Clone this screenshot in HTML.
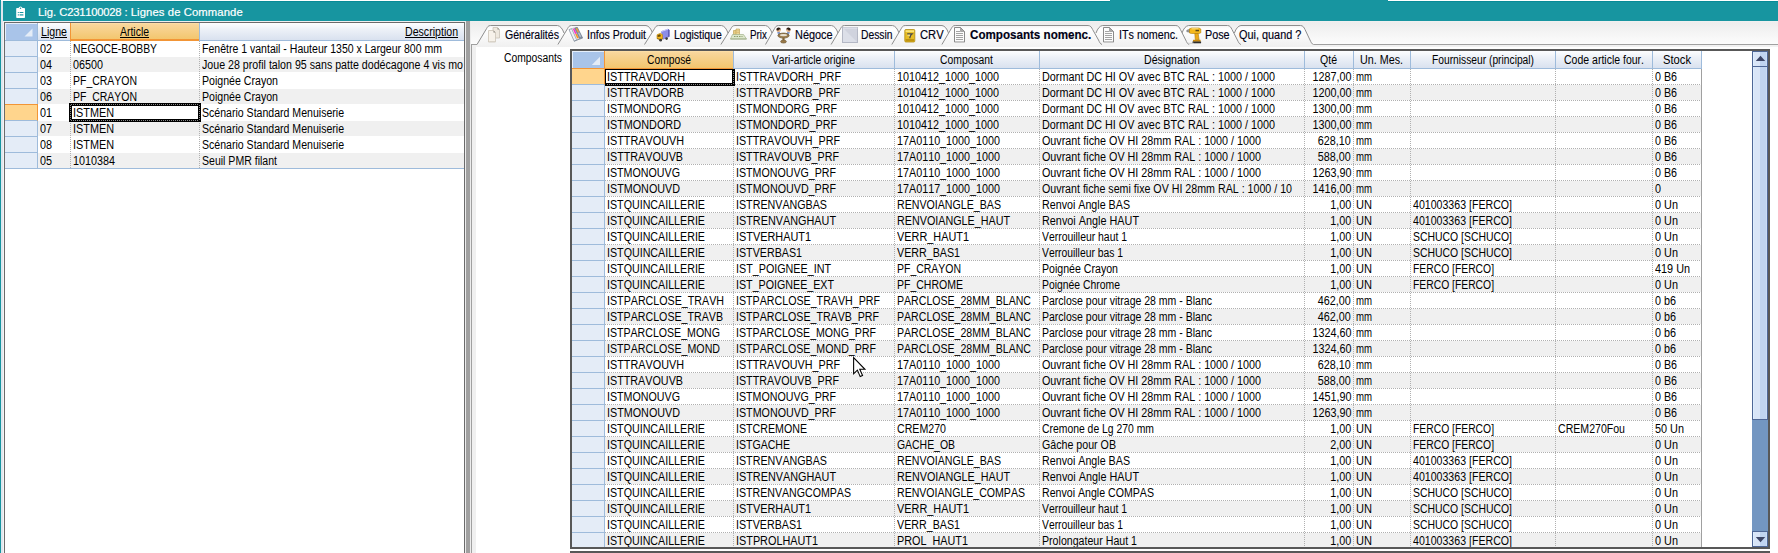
<!DOCTYPE html>
<html lang="fr"><head><meta charset="utf-8"><title>Lig. C231100028 : Lignes de Commande</title>
<style>
html,body{margin:0;padding:0}
body{width:1778px;height:553px;overflow:hidden;background:#fff;position:relative;
 font-family:"Liberation Sans",sans-serif;font-size:12px;color:#000;font-kerning:none}
div,span.t,span.h,svg{position:absolute}
div{box-sizing:border-box}
.t,.h{white-space:nowrap;line-height:15px;height:15px;transform-origin:0 50%;font-size:12px}
.t.r,.h.r{transform-origin:100% 50%}
.u{text-decoration:underline}
.clip{overflow:hidden}
.hd{background:linear-gradient(#fdfeff 0%,#eef2f8 35%,#d9e1ef 100%)}
.ho{background:linear-gradient(#ffe1aa 0%,#f8d69b 10%,#f3c66e 100%)}
.tab{font-size:12px;line-height:14px;white-space:nowrap;position:absolute;color:#000014;-webkit-text-stroke:0.15px #000014;transform-origin:0 50%}
</style></head><body>

<div style="left:0px;top:0px;width:1778px;height:21px;background:#1795a0"></div>
<div style="left:0px;top:0px;width:1px;height:553px;background:#1795a0"></div>
<div style="left:1px;top:0px;width:2px;height:553px;background:#dfe6ee"></div>
<div style="left:3px;top:0px;width:1px;height:553px;background:#f4f4f4"></div>
<div style="left:3px;top:0px;width:1775px;height:21px;background:#1795a0"></div>
<div style="left:1px;top:0px;width:1109px;height:1px;background:#fff"></div>
<div style="left:3px;top:1px;width:1107px;height:1px;background:#088b97"></div>
<div style="left:1388px;top:0px;width:390px;height:1px;background:#fff"></div>
<div style="left:1388px;top:1px;width:390px;height:1px;background:#088b97"></div>
<div style="left:3px;top:21px;width:1775px;height:1px;background:#f0f0f0"></div>
<svg style="left:16px;top:6px" width="10" height="13" viewBox="0 0 10 13">
<rect x=".2" y="2" width="8.800" height="10" rx=".8" fill="#fff"/>
<path d="M2.200 2.500L3.300 .9Q4.500 -.1 5.700 .9L6.800 2.500z" fill="#fff"/>
<circle cx="4.500" cy="2.300" r=".75" fill="#1795a0"/>
<rect x="1.800" y="6" width="1" height="1" fill="#1795a0"/><rect x="3.600" y="6" width="3.800" height="1" fill="#1795a0"/>
<rect x="1.800" y="8.300" width="1" height="1.200" fill="#1795a0"/><rect x="3.600" y="8.300" width="3.800" height="1.200" fill="#1795a0"/>
</svg>
<span class="h" style="left:38px;top:3px;font-size:11.2px;line-height:18px;height:18px;color:#fff;-webkit-text-stroke:0.2px #fff;position:absolute;transform:scaleX(1.008)">Lig. <span style="letter-spacing:-.26px">C231100028</span> : <span style="letter-spacing:.1px">Lignes de Commande</span></span>
<div style="left:4px;top:22px;width:461px;height:1px;background:#6b6b6b"></div>
<div style="left:4px;top:22px;width:1px;height:531px;background:#6b6b6b"></div>
<div style="left:464px;top:22px;width:1px;height:531px;background:#6b6b6b"></div>
<div style="left:465px;top:21px;width:1px;height:532px;background:#ececec"></div>
<div style="left:466px;top:21px;width:4px;height:532px;background:#a0a0a0"></div>
<div style="left:470px;top:21px;width:1px;height:532px;background:#ececec"></div>
<div style="left:5px;top:23px;width:32px;height:17px;background:#a9c4e9;border-left:1px solid #e6effb;border-top:1px solid #e6effb"></div>
<svg style="left:24px;top:28px" width="9" height="9"><path d="M8.500 .5V8.500H.5z" fill="#e4ecf7"/></svg>
<div style="left:37px;top:23px;width:1px;height:17px;background:#9ebbdb"></div>
<div class="hd" style="left:38px;top:23px;width:32px;height:17px;"></div>
<div class="ho" style="left:70px;top:23px;width:129px;height:17px;border-left:1px solid #f29536;border-bottom:1px solid #f29536"></div>
<div style="left:199px;top:23px;width:1px;height:17px;background:#9ebbdb"></div>
<div class="hd" style="left:200px;top:23px;width:264px;height:17px;"></div>
<div style="left:5px;top:40px;width:65px;height:1px;background:#9ebbdb"></div>
<div style="left:199px;top:40px;width:265px;height:1px;background:#9ebbdb"></div>
<div style="left:70px;top:40px;width:129px;height:1px;background:#f29536"></div>
<span class="t u" style="left:41px;top:25px;transform:scaleX(0.8855)">Ligne</span>
<span class="t u" style="left:119.50px;top:25px;transform:scaleX(0.8698)">Article</span>
<span class="t u r" style="right:1320px;top:25px;transform:scaleX(0.8830)">Description</span>
<div style="left:5px;top:41px;width:32px;height:15px;background:#e4ecf7"></div>
<div style="left:5px;top:56px;width:32px;height:1px;background:#9ebbdb"></div>
<div style="left:37px;top:41px;width:1px;height:16px;background:#9ebbdb"></div>
<span class="t" style="left:40px;top:42px;transform:scaleX(0.8990)">02</span>
<span class="t" style="left:73px;top:42px;transform:scaleX(0.8628)">NEGOCE-BOBBY</span>
<div class="clip" style="left:200px;top:41px;width:264px;height:15px">
<span class="t" style="left:2px;top:1px;transform:scaleX(0.8776)">Fenêtre 1 vantail - Hauteur 1350 x Largeur 800 mm</span>
</div>
<div style="left:5px;top:57px;width:32px;height:15px;background:#e4ecf7"></div>
<div style="left:5px;top:72px;width:32px;height:1px;background:#9ebbdb"></div>
<div style="left:37px;top:57px;width:1px;height:16px;background:#9ebbdb"></div>
<div style="left:38px;top:57px;width:426px;height:15px;background:#f0f0f0"></div>
<span class="t" style="left:40px;top:58px;transform:scaleX(0.8990)">04</span>
<span class="t" style="left:73px;top:58px;transform:scaleX(0.8990)">06500</span>
<div class="clip" style="left:200px;top:57px;width:264px;height:15px">
<span class="t" style="left:2px;top:1px;transform:scaleX(0.8872)">Joue 28 profil talon 95 sans patte dodécagone 4 vis mo</span>
</div>
<div style="left:5px;top:73px;width:32px;height:15px;background:#e4ecf7"></div>
<div style="left:5px;top:88px;width:32px;height:1px;background:#9ebbdb"></div>
<div style="left:37px;top:73px;width:1px;height:16px;background:#9ebbdb"></div>
<span class="t" style="left:40px;top:74px;transform:scaleX(0.8990)">03</span>
<span class="t" style="left:73px;top:74px;transform:scaleX(0.8727)">PF_CRAYON</span>
<div class="clip" style="left:200px;top:73px;width:264px;height:15px">
<span class="t" style="left:2px;top:1px;transform:scaleX(0.8831)">Poignée Crayon</span>
</div>
<div style="left:5px;top:89px;width:32px;height:15px;background:#e4ecf7"></div>
<div style="left:5px;top:104px;width:32px;height:1px;background:#9ebbdb"></div>
<div style="left:37px;top:89px;width:1px;height:16px;background:#9ebbdb"></div>
<div style="left:38px;top:89px;width:426px;height:15px;background:#f0f0f0"></div>
<span class="t" style="left:40px;top:90px;transform:scaleX(0.8990)">06</span>
<span class="t" style="left:73px;top:90px;transform:scaleX(0.8727)">PF_CRAYON</span>
<div class="clip" style="left:200px;top:89px;width:264px;height:15px">
<span class="t" style="left:2px;top:1px;transform:scaleX(0.8831)">Poignée Crayon</span>
</div>
<div style="left:5px;top:104px;width:33px;height:17px;background:#ffd58d;border-top:1px solid #f29536;border-right:1px solid #f29536;border-bottom:1px solid #9ebbdb"></div>
<span class="t" style="left:40px;top:106px;transform:scaleX(0.8990)">01</span>
<span class="t" style="left:73px;top:106px;transform:scaleX(0.9044)">ISTMEN</span>
<div class="clip" style="left:200px;top:105px;width:264px;height:15px">
<span class="t" style="left:2px;top:1px;transform:scaleX(0.8797)">Scénario Standard Menuiserie</span>
</div>
<div style="left:5px;top:121px;width:32px;height:15px;background:#e4ecf7"></div>
<div style="left:5px;top:136px;width:32px;height:1px;background:#9ebbdb"></div>
<div style="left:37px;top:121px;width:1px;height:16px;background:#9ebbdb"></div>
<div style="left:38px;top:121px;width:426px;height:15px;background:#f0f0f0"></div>
<span class="t" style="left:40px;top:122px;transform:scaleX(0.8990)">07</span>
<span class="t" style="left:73px;top:122px;transform:scaleX(0.9044)">ISTMEN</span>
<div class="clip" style="left:200px;top:121px;width:264px;height:15px">
<span class="t" style="left:2px;top:1px;transform:scaleX(0.8797)">Scénario Standard Menuiserie</span>
</div>
<div style="left:5px;top:137px;width:32px;height:15px;background:#e4ecf7"></div>
<div style="left:5px;top:152px;width:32px;height:1px;background:#9ebbdb"></div>
<div style="left:37px;top:137px;width:1px;height:16px;background:#9ebbdb"></div>
<span class="t" style="left:40px;top:138px;transform:scaleX(0.8990)">08</span>
<span class="t" style="left:73px;top:138px;transform:scaleX(0.9044)">ISTMEN</span>
<div class="clip" style="left:200px;top:137px;width:264px;height:15px">
<span class="t" style="left:2px;top:1px;transform:scaleX(0.8797)">Scénario Standard Menuiserie</span>
</div>
<div style="left:5px;top:153px;width:32px;height:15px;background:#e4ecf7"></div>
<div style="left:5px;top:168px;width:32px;height:1px;background:#9ebbdb"></div>
<div style="left:37px;top:153px;width:1px;height:16px;background:#9ebbdb"></div>
<div style="left:38px;top:153px;width:426px;height:15px;background:#f0f0f0"></div>
<span class="t" style="left:40px;top:154px;transform:scaleX(0.8990)">05</span>
<span class="t" style="left:73px;top:154px;transform:scaleX(0.8990)">1010384</span>
<div class="clip" style="left:200px;top:153px;width:264px;height:15px">
<span class="t" style="left:2px;top:1px;transform:scaleX(0.8786)">Seuil PMR filant</span>
</div>
<div style="left:70px;top:41px;width:1px;height:127px;background:repeating-linear-gradient(to bottom,#b0b0b0 0 1px,transparent 1px 2px)"></div>
<div style="left:199px;top:41px;width:1px;height:127px;background:repeating-linear-gradient(to bottom,#b0b0b0 0 1px,transparent 1px 2px)"></div>
<div style="left:5px;top:168px;width:459px;height:1px;background:#9ebbdb"></div>
<div style="left:69px;top:103px;width:132px;height:19px;border:3px solid #000"></div>
<div style="left:70px;top:104px;width:130px;height:1px;background:repeating-linear-gradient(to right,#000 0 1px,#8a8a8a 1px 2px)"></div>
<div style="left:70px;top:120px;width:130px;height:1px;background:repeating-linear-gradient(to right,#000 0 1px,#8a8a8a 1px 2px)"></div>
<div style="left:70px;top:104px;width:1px;height:17px;background:repeating-linear-gradient(to bottom,#000 0 1px,#8a8a8a 1px 2px)"></div>
<div style="left:199px;top:104px;width:1px;height:17px;background:repeating-linear-gradient(to bottom,#000 0 1px,#8a8a8a 1px 2px)"></div>
<div style="left:471px;top:22px;width:1307px;height:22px;background:linear-gradient(#ededed,#fcfcfc)"></div>
<div style="left:471px;top:44px;width:1307px;height:3px;background:#f2f2f2"></div>
<div style="left:471px;top:44px;width:5px;height:509px;background:#f0f0f0"></div>
<div style="left:471px;top:44px;width:1px;height:509px;background:#a0a0a0"></div>
<svg style="left:471px;top:22px" width="1307" height="25" viewBox="0 0 1307 25">
<defs><linearGradient id="tg" x1="0" y1="0" x2="0" y2="1"><stop offset="0" stop-color="#f3f3f3"/><stop offset=".16" stop-color="#ffffff"/><stop offset="1" stop-color="#f0f0f0"/></linearGradient><linearGradient id="sg" x1="0" y1="0" x2="0" y2="1"><stop offset="0" stop-color="#f3f3f3"/><stop offset=".16" stop-color="#ffffff"/><stop offset="1" stop-color="#f2f2f2"/></linearGradient></defs>
<path d="M0 22.5H6.0M842.5 22.5H1307" fill="none" stroke="#a0a0a0"/>
<path d="M6.0 22.5L15.5 6.7C16.3 5.3 17.0 3.5 19.5 3.5H86.5Q90.5 4.1 93.0 11.0L93.0 25H6.0z" fill="url(#tg)"/>
<path d="M6.0 22.5L15.5 6.7C16.3 5.3 17.0 3.5 19.5 3.5H86.5Q90.5 4.1 93.0 11.0" fill="none" stroke="#8e8e8e"/>
<path d="M86.9 22.5L96.5 6.7C97.3 5.3 98.0 3.5 100.5 3.5H175.0Q179.0 4.1 181.5 11.0L181.5 25H86.9z" fill="url(#tg)"/>
<path d="M86.9 22.5L96.5 6.7C97.3 5.3 98.0 3.5 100.5 3.5H175.0Q179.0 4.1 181.5 11.0" fill="none" stroke="#8e8e8e"/>
<path d="M173.5 22.5L183.5 6.7C184.3 5.3 185.0 3.5 187.5 3.5H250.5Q254.5 4.1 257.0 11.0L257.0 25H173.5z" fill="url(#tg)"/>
<path d="M173.5 22.5L183.5 6.7C184.3 5.3 185.0 3.5 187.5 3.5H250.5Q254.5 4.1 257.0 11.0" fill="none" stroke="#8e8e8e"/>
<path d="M249.9 22.5L259.9 6.7C260.7 5.3 261.4 3.5 263.9 3.5H294.5Q298.5 4.1 301.0 11.0L301.0 25H249.9z" fill="url(#tg)"/>
<path d="M249.9 22.5L259.9 6.7C260.7 5.3 261.4 3.5 263.9 3.5H294.5Q298.5 4.1 301.0 11.0" fill="none" stroke="#8e8e8e"/>
<path d="M294.5 22.5L303.5 6.7C304.3 5.3 305.0 3.5 307.5 3.5H360.5Q364.5 4.1 367.0 11.0L367.0 25H294.5z" fill="url(#tg)"/>
<path d="M294.5 22.5L303.5 6.7C304.3 5.3 305.0 3.5 307.5 3.5H360.5Q364.5 4.1 367.0 11.0" fill="none" stroke="#8e8e8e"/>
<path d="M360.1 22.5L369.5 6.7C370.3 5.3 371.0 3.5 373.5 3.5H421.5Q425.5 4.1 428.0 11.0L428.0 25H360.1z" fill="url(#tg)"/>
<path d="M360.1 22.5L369.5 6.7C370.3 5.3 371.0 3.5 373.5 3.5H421.5Q425.5 4.1 428.0 11.0" fill="none" stroke="#8e8e8e"/>
<path d="M420.8 22.5L430.2 6.7C431.0 5.3 431.7 3.5 434.2 3.5H471.0Q475.0 4.1 477.5 11.0L477.5 25H420.8z" fill="url(#tg)"/>
<path d="M420.8 22.5L430.2 6.7C431.0 5.3 431.7 3.5 434.2 3.5H471.0Q475.0 4.1 477.5 11.0" fill="none" stroke="#8e8e8e"/>
<path d="M763.4 11.0Q765.9 4.1 769.9 3.5H829.5C832.0 3.5 833.0 5.5 834.0 7.5L839.0 18.0C840.0 20.0 840.7 22.0 842.5 22.5L842.5 25H763.4z" fill="url(#tg)"/>
<path d="M763.4 11.0Q765.9 4.1 769.9 3.5H829.5C832.0 3.5 833.0 5.5 834.0 7.5L839.0 18.0C840.0 20.0 840.7 22.0 842.5 22.5" fill="none" stroke="#8e8e8e"/>
<path d="M711.0 11.0Q713.5 4.1 717.5 3.5H756.5C759.0 3.5 760.0 5.5 761.0 7.5L766.4 18.0C767.4 20.0 768.1 22.0 769.9 22.5L769.9 25H711.0z" fill="url(#tg)"/>
<path d="M711.0 11.0Q713.5 4.1 717.5 3.5H756.5C759.0 3.5 760.0 5.5 761.0 7.5L766.4 18.0C767.4 20.0 768.1 22.0 769.9 22.5" fill="none" stroke="#8e8e8e"/>
<path d="M625.0 11.0Q627.5 4.1 631.5 3.5H704.9C707.4 3.5 708.4 5.5 709.4 7.5L714.7 18.0C715.7 20.0 716.4 22.0 718.2 22.5L718.2 25H625.0z" fill="url(#tg)"/>
<path d="M625.0 11.0Q627.5 4.1 631.5 3.5H704.9C707.4 3.5 708.4 5.5 709.4 7.5L714.7 18.0C715.7 20.0 716.4 22.0 718.2 22.5" fill="none" stroke="#8e8e8e"/>
<path d="M470.9 22.5L480.2 6.7C481.0 5.3 481.7 3.5 484.2 3.5H617.1C619.6 3.5 620.6 5.5 621.6 7.5L627.5 18.0C628.5 20.0 629.2 22.0 631.0 22.5L631.0 25H470.9z" fill="url(#sg)"/>
<path d="M470.9 22.5L480.2 6.7C481.0 5.3 481.7 3.5 484.2 3.5H617.1C619.6 3.5 620.6 5.5 621.6 7.5L627.5 18.0C628.5 20.0 629.2 22.0 631.0 22.5" fill="none" stroke="#8e8e8e"/>
</svg>
<span class="tab" style="left:505.0px;top:28px;transform:scaleX(0.8783);">Généralités</span>
<span class="tab" style="left:586.5px;top:28px;transform:scaleX(0.8757);">Infos Produit</span>
<span class="tab" style="left:673.9px;top:28px;transform:scaleX(0.8719);">Logistique</span>
<span class="tab" style="left:749.8px;top:28px;transform:scaleX(0.8129);">Prix</span>
<span class="tab" style="left:794.8px;top:28px;transform:scaleX(0.9091);">Négoce</span>
<span class="tab" style="left:861.0px;top:28px;transform:scaleX(0.8588);">Dessin</span>
<span class="tab" style="left:919.5px;top:28px;transform:scaleX(0.9316);">CRV</span>
<span class="tab" style="left:969.6px;top:28px;transform:scaleX(0.9677);font-weight:bold;">Composants nomenc.</span>
<span class="tab" style="left:1118.5px;top:28px;transform:scaleX(0.8939);">ITs nomenc.</span>
<span class="tab" style="left:1205.0px;top:28px;transform:scaleX(0.8994);">Pose</span>
<span class="tab" style="left:1238.8px;top:28px;transform:scaleX(0.9066);">Qui, quand ?</span>
<svg style="left:487px;top:26px" width="14" height="17" viewBox="0 0 14 17"><path d="M6 1.500h4.500l2 2v8.500H6z" fill="#efe9df" stroke="#c9c2b6" stroke-width=".8"/><path d="M10.500 1.500v2h2z" fill="#8f8a82"/><path d="M1.500 4.500h5l2 2v9.500h-7z" fill="#f7f2ea" stroke="#cbc4b8" stroke-width=".8"/><path d="M6.500 4.500v2h2z" fill="#85817a"/><path d="M2.500 15.500h6" stroke="#d9d3c8" stroke-width="1"/></svg>
<svg style="left:568px;top:27px" width="16" height="15" viewBox="0 0 16 15"><path d="M1 2.600l2.600-1 5.200 11.200-2.600 1.400z" fill="#eef1f5" stroke="#8a94a2" stroke-width=".8"/><path d="M3.800 1.600l2.400-.7 5 10.800-2.400 1z" fill="#f4f4f6" stroke="#9aa3b0" stroke-width=".5"/><path d="M4.800 1.800l1.500-.4 2.300 5-1.500.5z" fill="#ff2fc6"/><path d="M7.200 7.200l1.500-.5 2 4.300-1.500.6z" fill="#ff9418"/><path d="M6.700 .9l2.600-.6 5.200 10.500-2.700 1.100z" fill="#8793a5" stroke="#5d6a7d" stroke-width=".6"/><path d="M7.800 1.200l1.300-.3 2 4.200-1.300.4z" fill="#f0a030"/><path d="M10 6l1.200-.4 2 4-1.300.5z" fill="#b8c2d0"/><path d="M6.200 14.200l8.600-3.400" stroke="#8a94a2" stroke-width="1"/></svg>
<svg style="left:656px;top:28px" width="14" height="14" viewBox="0 0 14 14"><path d="M5.500 3.500l6.500-2.300 1.300.8v6.500l-6.500 2.800z" fill="#8d8de8" stroke="#6a6ac8" stroke-width=".6"/><path d="M5.500 3.500l6.500-2.300" stroke="#cfcfff" stroke-width="1"/><path d="M12 1.200l1.300.8v6.500l-1.300.5z" fill="#5f5fb8"/><path d="M1 6.800l3.300-1.500 2.200 1.400v4.300l-2 1-3.500-1.400z" fill="#f4b61e" stroke="#b98512" stroke-width=".6"/><path d="M1.600 7.200l2.400-.9.700.6v1.600l-3.100.5z" fill="#6a4e0c"/><path d="M1 10.300l3.500 1.400 2-1" stroke="#8a6a10" stroke-width=".7" fill="none"/><circle cx="4.600" cy="12.200" r="1.400" fill="#3c3c3c"/><circle cx="10.600" cy="10.600" r="1.300" fill="#3c3c3c"/></svg>
<svg style="left:730px;top:28px" width="17" height="12" viewBox="0 0 17 12"><path d="M3.500 2.500h3v4.500h-3z" fill="#e6cc84" stroke="#bb9a48" stroke-width=".6"/><path d="M6 1h3.500v6H6z" fill="#efd99a" stroke="#bb9a48" stroke-width=".6"/><path d="M6.300 2.800h3M6.300 4.600h3" stroke="#caa95a" stroke-width=".5"/><path d="M2.500 6.500h11l3 4.500H.5z" fill="#dde7cc" stroke="#a3b28c" stroke-width=".7"/><path d="M4 8.500h8.500" stroke="#8c9e6c" stroke-width="1.200" stroke-dasharray="1.500 1"/><path d="M.5 11h16" stroke="#98a880" stroke-width=".8"/></svg>
<svg style="left:775px;top:27px" width="17" height="17" viewBox="0 0 17 17"><circle cx="3.600" cy="3.200" r="2.100" fill="#e8b890"/><path d="M1.400 3a2.200 2.200 0 0 1 4.400-.6l-1.800.2-.8 1.200z" fill="#2a1c14"/><circle cx="13.400" cy="3.200" r="2.100" fill="#e8b890"/><path d="M15.600 3a2.200 2.200 0 0 0-4.400-.6l1.800.2.800 1.200z" fill="#2a1c14"/><path d="M2 5.200l2.600-.4 1.400 3-2.200.6z" fill="#7f97c8"/><path d="M15 5.200l-2.600-.4-1.400 3 2.200.6z" fill="#7f97c8"/><ellipse cx="8.500" cy="8.600" rx="5.600" ry="2.500" fill="#9c7c4c" stroke="#66502c" stroke-width=".7"/><ellipse cx="8.500" cy="8.100" rx="3.600" ry="1.200" fill="#e6dfd0"/><path d="M7.400 10.800h2.200v2.800H7.400z" fill="#86683a"/><ellipse cx="8.500" cy="14.600" rx="2.900" ry="1.500" fill="#9a7a48" stroke="#66502c" stroke-width=".6"/></svg>
<svg style="left:842px;top:27px" width="17" height="17" viewBox="0 0 17 17"><rect x=".5" y=".5" width="15" height="15" fill="#d0d3de" stroke="#b4b8c5" stroke-width="1"/><path d="M1 1L15 15H1z" fill="#dcdfe8"/><path d="M1 1h14.500" stroke="#e6e8ef" stroke-width="1"/></svg>
<svg style="left:904px;top:29px" width="12" height="14" viewBox="0 0 12 14"><rect x=".8" y=".5" width="10" height="12.500" rx="1" fill="#e6bc24" stroke="#b08c14" stroke-width=".8"/><rect x="1.600" y="1.300" width="8.400" height="1.800" fill="#f9e47c"/><rect x="1.600" y="10" width="8.400" height="2.400" fill="#c09410"/><path d="M3.200 4.800h5l-1.500 1.500-1 3" fill="none" stroke="#4a4a4a" stroke-width="1.200"/><path d="M3.500 6.200h2.500" stroke="#f6f0d0" stroke-width=".8"/></svg>
<svg style="left:953px;top:27px" width="13" height="16" viewBox="0 0 13 16"><path d="M1.500 .5h6l4 4v10.500h-10z" fill="#fcfcfc" stroke="#8a8a8a" stroke-width="1"/><path d="M7.500 .5v4h4z" fill="#a8a8a8" stroke="#8a8a8a" stroke-width=".6"/><path d="M3 4.500h4M3 6.500h7M3 8.500h7M3 10.500h7M3 12.500h7" stroke="#a4a4a4" stroke-width="1"/><path d="M2 15.500h9.500" stroke="#c8c8c8" stroke-width="1"/></svg>
<svg style="left:1102px;top:27px" width="13" height="16" viewBox="0 0 13 16"><path d="M1.500 .5h6l4 4v10.500h-10z" fill="#fcfcfc" stroke="#8a8a8a" stroke-width="1"/><path d="M7.500 .5v4h4z" fill="#a8a8a8" stroke="#8a8a8a" stroke-width=".6"/><path d="M3 4.500h4M3 6.500h7M3 8.500h7M3 10.500h7M3 12.500h7" stroke="#a4a4a4" stroke-width="1"/><path d="M2 15.500h9.500" stroke="#c8c8c8" stroke-width="1"/></svg>
<svg style="left:1186px;top:27px" width="17" height="17" viewBox="0 0 17 17"><path d="M.8 3.200l2.800-.9v3l-2.800-.6z" fill="#9a9a9a" stroke="#6a6a6a" stroke-width=".5"/><path d="M3.500 1.800l2-.8h7.500l1.800 1v3.800l-1.800.7H5.500l-2-.5z" fill="#f5b81c" stroke="#b07c08" stroke-width=".6"/><path d="M5.500 1.800h7" stroke="#ffe488" stroke-width="1"/><path d="M9.500 2.800h3.500v1.500H9.500z" fill="#5a4a18"/><path d="M8.800 6.500h3.400l.9 6.300H9.300z" fill="#eeaa18" stroke="#b07c08" stroke-width=".6"/><path d="M7 12.800h7.600v2H7z" fill="#c8880c"/><path d="M6.500 14.500h8.600v1.800H6.500z" fill="#2e2e2e"/><path d="M2 16.300h6" stroke="#cfcfcf" stroke-width="1"/></svg>
<span class="t" style="left:504px;top:51px;transform:scaleX(0.8610)">Composants</span>
<div style="left:570px;top:49px;width:1200px;height:2px;background:#585858"></div>
<div style="left:570px;top:49px;width:2px;height:500px;background:#585858"></div>
<div style="left:1768px;top:49px;width:2px;height:500px;background:#585858"></div>
<div style="left:570px;top:547px;width:1200px;height:2px;background:#585858"></div>
<div style="left:570px;top:551px;width:1200px;height:2px;background:#585858"></div>
<div style="left:572px;top:51px;width:32px;height:17px;background:#a9c4e9;border-left:1px solid #e6effb;border-top:1px solid #e6effb"></div>
<svg style="left:591px;top:56px" width="10" height="10"><path d="M9 .8V9H.8z" fill="#e4ecf7"/></svg>
<div class="ho" style="left:604px;top:51px;width:129px;height:17px;border-left:1px solid #f29536"></div>
<div style="left:604px;top:68px;width:129px;height:1px;background:#f29536"></div>
<span class="t" style="left:646.50px;top:53px;transform:scaleX(0.8567)">Composé</span>
<div class="hd" style="left:734px;top:51px;width:160px;height:17px"></div>
<div style="left:733px;top:51px;width:1px;height:17px;background:#9ebbdb"></div>
<div style="left:733px;top:68px;width:161px;height:1px;background:#9ebbdb"></div>
<span class="t" style="left:772.00px;top:53px;transform:scaleX(0.8584)">Vari-article origine</span>
<div class="hd" style="left:895px;top:51px;width:144px;height:17px"></div>
<div style="left:894px;top:51px;width:1px;height:17px;background:#9ebbdb"></div>
<div style="left:894px;top:68px;width:145px;height:1px;background:#9ebbdb"></div>
<span class="t" style="left:940.00px;top:53px;transform:scaleX(0.8637)">Composant</span>
<div class="hd" style="left:1040px;top:51px;width:264px;height:17px"></div>
<div style="left:1039px;top:51px;width:1px;height:17px;background:#9ebbdb"></div>
<div style="left:1039px;top:68px;width:265px;height:1px;background:#9ebbdb"></div>
<span class="t" style="left:1143.50px;top:53px;transform:scaleX(0.8836)">Désignation</span>
<div class="hd" style="left:1305px;top:51px;width:48px;height:17px"></div>
<div style="left:1304px;top:51px;width:1px;height:17px;background:#9ebbdb"></div>
<div style="left:1304px;top:68px;width:49px;height:1px;background:#9ebbdb"></div>
<span class="t" style="left:1320.00px;top:53px;transform:scaleX(0.8789)">Qté</span>
<div class="hd" style="left:1354px;top:51px;width:56px;height:17px"></div>
<div style="left:1353px;top:51px;width:1px;height:17px;background:#9ebbdb"></div>
<div style="left:1353px;top:68px;width:57px;height:1px;background:#9ebbdb"></div>
<span class="t" style="left:1360.00px;top:53px;transform:scaleX(0.8956)">Un. Mes.</span>
<div class="hd" style="left:1411px;top:51px;width:144px;height:17px"></div>
<div style="left:1410px;top:51px;width:1px;height:17px;background:#9ebbdb"></div>
<div style="left:1410px;top:68px;width:145px;height:1px;background:#9ebbdb"></div>
<span class="t" style="left:1431.50px;top:53px;transform:scaleX(0.8545)">Fournisseur (principal)</span>
<div class="hd" style="left:1556px;top:51px;width:96px;height:17px"></div>
<div style="left:1555px;top:51px;width:1px;height:17px;background:#9ebbdb"></div>
<div style="left:1555px;top:68px;width:97px;height:1px;background:#9ebbdb"></div>
<span class="t" style="left:1563.50px;top:53px;transform:scaleX(0.8756)">Code article four.</span>
<div class="hd" style="left:1653px;top:51px;width:48px;height:17px"></div>
<div style="left:1652px;top:51px;width:1px;height:17px;background:#9ebbdb"></div>
<div style="left:1652px;top:68px;width:49px;height:1px;background:#9ebbdb"></div>
<span class="t" style="left:1662.50px;top:53px;transform:scaleX(0.9330)">Stock</span>
<div style="left:1701px;top:51px;width:1px;height:18px;background:#9ebbdb"></div>
<div style="left:572px;top:68px;width:32px;height:1px;background:#9ebbdb"></div>
<div class="clip" style="left:572px;top:69px;width:1180px;height:478px">
<div style="left:0px;top:-1px;width:33px;height:17px;background:#ffd58d;border-top:1px solid #f29536;border-right:1px solid #f29536;border-bottom:1px solid #9ebbdb"></div>
<div style="left:33px;top:15px;width:1096px;height:1px;background:repeating-linear-gradient(to right,#b0b0b0 0 1px,transparent 1px 2px)"></div>
<span class="t" style="left:35px;top:1px;transform:scaleX(0.9071)">ISTTRAVDORH</span>
<span class="t" style="left:164px;top:1px;transform:scaleX(0.9000)">ISTTRAVDORH_PRF</span>
<span class="t" style="left:325px;top:1px;transform:scaleX(0.8990)">1010412_1000_1000</span>
<div class="clip" style="left:468px;top:0px;width:264px;height:15px">
<span class="t" style="left:2px;top:1px;transform:scaleX(0.9004)">Dormant DC HI OV avec BTC RAL : 1000 / 1000</span>
</div>
<span class="t r" style="right:401px;top:1px;transform:scaleX(0.8991)">1287,00</span>
<span class="t" style="left:784px;top:1px;transform:scaleX(0.8003)">mm</span>
<span class="t" style="left:1083px;top:1px;transform:scaleX(0.8912)">0 B6</span>
<div style="left:0px;top:16px;width:32px;height:15px;background:#e4ecf7"></div>
<div style="left:0px;top:31px;width:32px;height:1px;background:#9ebbdb"></div>
<div style="left:32px;top:16px;width:1px;height:16px;background:#9ebbdb"></div>
<div style="left:33px;top:16px;width:1096px;height:15px;background:#f0f0f0"></div>
<div style="left:33px;top:31px;width:1096px;height:1px;background:repeating-linear-gradient(to right,#b0b0b0 0 1px,transparent 1px 2px)"></div>
<span class="t" style="left:35px;top:17px;transform:scaleX(0.9024)">ISTTRAVDORB</span>
<span class="t" style="left:164px;top:17px;transform:scaleX(0.8965)">ISTTRAVDORB_PRF</span>
<span class="t" style="left:325px;top:17px;transform:scaleX(0.8990)">1010412_1000_1000</span>
<div class="clip" style="left:468px;top:16px;width:264px;height:15px">
<span class="t" style="left:2px;top:1px;transform:scaleX(0.9004)">Dormant DC HI OV avec BTC RAL : 1000 / 1000</span>
</div>
<span class="t r" style="right:401px;top:17px;transform:scaleX(0.8991)">1200,00</span>
<span class="t" style="left:784px;top:17px;transform:scaleX(0.8003)">mm</span>
<span class="t" style="left:1083px;top:17px;transform:scaleX(0.8912)">0 B6</span>
<div style="left:0px;top:32px;width:32px;height:15px;background:#e4ecf7"></div>
<div style="left:0px;top:47px;width:32px;height:1px;background:#9ebbdb"></div>
<div style="left:32px;top:32px;width:1px;height:16px;background:#9ebbdb"></div>
<div style="left:33px;top:47px;width:1096px;height:1px;background:repeating-linear-gradient(to right,#b0b0b0 0 1px,transparent 1px 2px)"></div>
<span class="t" style="left:35px;top:33px;transform:scaleX(0.8952)">ISTMONDORG</span>
<span class="t" style="left:164px;top:33px;transform:scaleX(0.8911)">ISTMONDORG_PRF</span>
<span class="t" style="left:325px;top:33px;transform:scaleX(0.8990)">1010412_1000_1000</span>
<div class="clip" style="left:468px;top:32px;width:264px;height:15px">
<span class="t" style="left:2px;top:1px;transform:scaleX(0.9004)">Dormant DC HI OV avec BTC RAL : 1000 / 1000</span>
</div>
<span class="t r" style="right:401px;top:33px;transform:scaleX(0.8991)">1300,00</span>
<span class="t" style="left:784px;top:33px;transform:scaleX(0.8003)">mm</span>
<span class="t" style="left:1083px;top:33px;transform:scaleX(0.8912)">0 B6</span>
<div style="left:0px;top:48px;width:32px;height:15px;background:#e4ecf7"></div>
<div style="left:0px;top:63px;width:32px;height:1px;background:#9ebbdb"></div>
<div style="left:32px;top:48px;width:1px;height:16px;background:#9ebbdb"></div>
<div style="left:33px;top:48px;width:1096px;height:15px;background:#f0f0f0"></div>
<div style="left:33px;top:63px;width:1096px;height:1px;background:repeating-linear-gradient(to right,#b0b0b0 0 1px,transparent 1px 2px)"></div>
<span class="t" style="left:35px;top:49px;transform:scaleX(0.9025)">ISTMONDORD</span>
<span class="t" style="left:164px;top:49px;transform:scaleX(0.8964)">ISTMONDORD_PRF</span>
<span class="t" style="left:325px;top:49px;transform:scaleX(0.8990)">1010412_1000_1000</span>
<div class="clip" style="left:468px;top:48px;width:264px;height:15px">
<span class="t" style="left:2px;top:1px;transform:scaleX(0.9004)">Dormant DC HI OV avec BTC RAL : 1000 / 1000</span>
</div>
<span class="t r" style="right:401px;top:49px;transform:scaleX(0.8991)">1300,00</span>
<span class="t" style="left:784px;top:49px;transform:scaleX(0.8003)">mm</span>
<span class="t" style="left:1083px;top:49px;transform:scaleX(0.8912)">0 B6</span>
<div style="left:0px;top:64px;width:32px;height:15px;background:#e4ecf7"></div>
<div style="left:0px;top:79px;width:32px;height:1px;background:#9ebbdb"></div>
<div style="left:32px;top:64px;width:1px;height:16px;background:#9ebbdb"></div>
<div style="left:33px;top:79px;width:1096px;height:1px;background:repeating-linear-gradient(to right,#b0b0b0 0 1px,transparent 1px 2px)"></div>
<span class="t" style="left:35px;top:65px;transform:scaleX(0.9024)">ISTTRAVOUVH</span>
<span class="t" style="left:164px;top:65px;transform:scaleX(0.8965)">ISTTRAVOUVH_PRF</span>
<span class="t" style="left:325px;top:65px;transform:scaleX(0.8974)">17A0110_1000_1000</span>
<div class="clip" style="left:468px;top:64px;width:264px;height:15px">
<span class="t" style="left:2px;top:1px;transform:scaleX(0.8971)">Ouvrant fiche OV HI 28mm RAL : 1000 / 1000</span>
</div>
<span class="t r" style="right:401px;top:65px;transform:scaleX(0.8991)">628,10</span>
<span class="t" style="left:784px;top:65px;transform:scaleX(0.8003)">mm</span>
<span class="t" style="left:1083px;top:65px;transform:scaleX(0.8912)">0 B6</span>
<div style="left:0px;top:80px;width:32px;height:15px;background:#e4ecf7"></div>
<div style="left:0px;top:95px;width:32px;height:1px;background:#9ebbdb"></div>
<div style="left:32px;top:80px;width:1px;height:16px;background:#9ebbdb"></div>
<div style="left:33px;top:80px;width:1096px;height:15px;background:#f0f0f0"></div>
<div style="left:33px;top:95px;width:1096px;height:1px;background:repeating-linear-gradient(to right,#b0b0b0 0 1px,transparent 1px 2px)"></div>
<span class="t" style="left:35px;top:81px;transform:scaleX(0.8976)">ISTTRAVOUVB</span>
<span class="t" style="left:164px;top:81px;transform:scaleX(0.8930)">ISTTRAVOUVB_PRF</span>
<span class="t" style="left:325px;top:81px;transform:scaleX(0.8974)">17A0110_1000_1000</span>
<div class="clip" style="left:468px;top:80px;width:264px;height:15px">
<span class="t" style="left:2px;top:1px;transform:scaleX(0.8971)">Ouvrant fiche OV HI 28mm RAL : 1000 / 1000</span>
</div>
<span class="t r" style="right:401px;top:81px;transform:scaleX(0.8991)">588,00</span>
<span class="t" style="left:784px;top:81px;transform:scaleX(0.8003)">mm</span>
<span class="t" style="left:1083px;top:81px;transform:scaleX(0.8912)">0 B6</span>
<div style="left:0px;top:96px;width:32px;height:15px;background:#e4ecf7"></div>
<div style="left:0px;top:111px;width:32px;height:1px;background:#9ebbdb"></div>
<div style="left:32px;top:96px;width:1px;height:16px;background:#9ebbdb"></div>
<div style="left:33px;top:111px;width:1096px;height:1px;background:repeating-linear-gradient(to right,#b0b0b0 0 1px,transparent 1px 2px)"></div>
<span class="t" style="left:35px;top:97px;transform:scaleX(0.8902)">ISTMONOUVG</span>
<span class="t" style="left:164px;top:97px;transform:scaleX(0.8875)">ISTMONOUVG_PRF</span>
<span class="t" style="left:325px;top:97px;transform:scaleX(0.8974)">17A0110_1000_1000</span>
<div class="clip" style="left:468px;top:96px;width:264px;height:15px">
<span class="t" style="left:2px;top:1px;transform:scaleX(0.8971)">Ouvrant fiche OV HI 28mm RAL : 1000 / 1000</span>
</div>
<span class="t r" style="right:401px;top:97px;transform:scaleX(0.8991)">1263,90</span>
<span class="t" style="left:784px;top:97px;transform:scaleX(0.8003)">mm</span>
<span class="t" style="left:1083px;top:97px;transform:scaleX(0.8912)">0 B6</span>
<div style="left:0px;top:112px;width:32px;height:15px;background:#e4ecf7"></div>
<div style="left:0px;top:127px;width:32px;height:1px;background:#9ebbdb"></div>
<div style="left:32px;top:112px;width:1px;height:16px;background:#9ebbdb"></div>
<div style="left:33px;top:112px;width:1096px;height:15px;background:#f0f0f0"></div>
<div style="left:33px;top:127px;width:1096px;height:1px;background:repeating-linear-gradient(to right,#b0b0b0 0 1px,transparent 1px 2px)"></div>
<span class="t" style="left:35px;top:113px;transform:scaleX(0.8975)">ISTMONOUVD</span>
<span class="t" style="left:164px;top:113px;transform:scaleX(0.8928)">ISTMONOUVD_PRF</span>
<span class="t" style="left:325px;top:113px;transform:scaleX(0.8974)">17A0117_1000_1000</span>
<div class="clip" style="left:468px;top:112px;width:264px;height:15px">
<span class="t" style="left:2px;top:1px;transform:scaleX(0.8883)">Ouvrant fiche semi fixe OV HI 28mm RAL : 1000 / 10</span>
</div>
<span class="t r" style="right:401px;top:113px;transform:scaleX(0.8991)">1416,00</span>
<span class="t" style="left:784px;top:113px;transform:scaleX(0.8003)">mm</span>
<span class="t" style="left:1083px;top:113px;transform:scaleX(0.8990)">0</span>
<div style="left:0px;top:128px;width:32px;height:15px;background:#e4ecf7"></div>
<div style="left:0px;top:143px;width:32px;height:1px;background:#9ebbdb"></div>
<div style="left:32px;top:128px;width:1px;height:16px;background:#9ebbdb"></div>
<div style="left:33px;top:143px;width:1096px;height:1px;background:repeating-linear-gradient(to right,#b0b0b0 0 1px,transparent 1px 2px)"></div>
<span class="t" style="left:35px;top:129px;transform:scaleX(0.8907)">ISTQUINCAILLERIE</span>
<span class="t" style="left:164px;top:129px;transform:scaleX(0.8921)">ISTRENVANGBAS</span>
<span class="t" style="left:325px;top:129px;transform:scaleX(0.8860)">RENVOIANGLE_BAS</span>
<div class="clip" style="left:468px;top:128px;width:264px;height:15px">
<span class="t" style="left:2px;top:1px;transform:scaleX(0.8915)">Renvoi Angle BAS</span>
</div>
<span class="t r" style="right:401px;top:129px;transform:scaleX(0.8991)">1,00</span>
<span class="t" style="left:784px;top:129px;transform:scaleX(0.9231)">UN</span>
<span class="t" style="left:841px;top:129px;transform:scaleX(0.8834)">401003363 [FERCO]</span>
<span class="t" style="left:1083px;top:129px;transform:scaleX(0.9074)">0 Un</span>
<div style="left:0px;top:144px;width:32px;height:15px;background:#e4ecf7"></div>
<div style="left:0px;top:159px;width:32px;height:1px;background:#9ebbdb"></div>
<div style="left:32px;top:144px;width:1px;height:16px;background:#9ebbdb"></div>
<div style="left:33px;top:144px;width:1096px;height:15px;background:#f0f0f0"></div>
<div style="left:33px;top:159px;width:1096px;height:1px;background:repeating-linear-gradient(to right,#b0b0b0 0 1px,transparent 1px 2px)"></div>
<span class="t" style="left:35px;top:145px;transform:scaleX(0.8907)">ISTQUINCAILLERIE</span>
<span class="t" style="left:164px;top:145px;transform:scaleX(0.9036)">ISTRENVANGHAUT</span>
<span class="t" style="left:325px;top:145px;transform:scaleX(0.8966)">RENVOIANGLE_HAUT</span>
<div class="clip" style="left:468px;top:144px;width:264px;height:15px">
<span class="t" style="left:2px;top:1px;transform:scaleX(0.9034)">Renvoi Angle HAUT</span>
</div>
<span class="t r" style="right:401px;top:145px;transform:scaleX(0.8991)">1,00</span>
<span class="t" style="left:784px;top:145px;transform:scaleX(0.9231)">UN</span>
<span class="t" style="left:841px;top:145px;transform:scaleX(0.8834)">401003363 [FERCO]</span>
<span class="t" style="left:1083px;top:145px;transform:scaleX(0.9074)">0 Un</span>
<div style="left:0px;top:160px;width:32px;height:15px;background:#e4ecf7"></div>
<div style="left:0px;top:175px;width:32px;height:1px;background:#9ebbdb"></div>
<div style="left:32px;top:160px;width:1px;height:16px;background:#9ebbdb"></div>
<div style="left:33px;top:175px;width:1096px;height:1px;background:repeating-linear-gradient(to right,#b0b0b0 0 1px,transparent 1px 2px)"></div>
<span class="t" style="left:35px;top:161px;transform:scaleX(0.8907)">ISTQUINCAILLERIE</span>
<span class="t" style="left:164px;top:161px;transform:scaleX(0.9071)">ISTVERHAUT1</span>
<span class="t" style="left:325px;top:161px;transform:scaleX(0.9073)">VERR_HAUT1</span>
<div class="clip" style="left:468px;top:160px;width:264px;height:15px">
<span class="t" style="left:2px;top:1px;transform:scaleX(0.8669)">Verrouilleur haut 1</span>
</div>
<span class="t r" style="right:401px;top:161px;transform:scaleX(0.8991)">1,00</span>
<span class="t" style="left:784px;top:161px;transform:scaleX(0.9231)">UN</span>
<span class="t" style="left:841px;top:161px;transform:scaleX(0.8684)">SCHUCO [SCHUCO]</span>
<span class="t" style="left:1083px;top:161px;transform:scaleX(0.9074)">0 Un</span>
<div style="left:0px;top:176px;width:32px;height:15px;background:#e4ecf7"></div>
<div style="left:0px;top:191px;width:32px;height:1px;background:#9ebbdb"></div>
<div style="left:32px;top:176px;width:1px;height:16px;background:#9ebbdb"></div>
<div style="left:33px;top:176px;width:1096px;height:15px;background:#f0f0f0"></div>
<div style="left:33px;top:191px;width:1096px;height:1px;background:repeating-linear-gradient(to right,#b0b0b0 0 1px,transparent 1px 2px)"></div>
<span class="t" style="left:35px;top:177px;transform:scaleX(0.8907)">ISTQUINCAILLERIE</span>
<span class="t" style="left:164px;top:177px;transform:scaleX(0.8916)">ISTVERBAS1</span>
<span class="t" style="left:325px;top:177px;transform:scaleX(0.8911)">VERR_BAS1</span>
<div class="clip" style="left:468px;top:176px;width:264px;height:15px">
<span class="t" style="left:2px;top:1px;transform:scaleX(0.8613)">Verrouilleur bas 1</span>
</div>
<span class="t r" style="right:401px;top:177px;transform:scaleX(0.8991)">1,00</span>
<span class="t" style="left:784px;top:177px;transform:scaleX(0.9231)">UN</span>
<span class="t" style="left:841px;top:177px;transform:scaleX(0.8684)">SCHUCO [SCHUCO]</span>
<span class="t" style="left:1083px;top:177px;transform:scaleX(0.9074)">0 Un</span>
<div style="left:0px;top:192px;width:32px;height:15px;background:#e4ecf7"></div>
<div style="left:0px;top:207px;width:32px;height:1px;background:#9ebbdb"></div>
<div style="left:32px;top:192px;width:1px;height:16px;background:#9ebbdb"></div>
<div style="left:33px;top:207px;width:1096px;height:1px;background:repeating-linear-gradient(to right,#b0b0b0 0 1px,transparent 1px 2px)"></div>
<span class="t" style="left:35px;top:193px;transform:scaleX(0.8907)">ISTQUINCAILLERIE</span>
<span class="t" style="left:164px;top:193px;transform:scaleX(0.8960)">IST_POIGNEE_INT</span>
<span class="t" style="left:325px;top:193px;transform:scaleX(0.8727)">PF_CRAYON</span>
<div class="clip" style="left:468px;top:192px;width:264px;height:15px">
<span class="t" style="left:2px;top:1px;transform:scaleX(0.8831)">Poignée Crayon</span>
</div>
<span class="t r" style="right:401px;top:193px;transform:scaleX(0.8991)">1,00</span>
<span class="t" style="left:784px;top:193px;transform:scaleX(0.9231)">UN</span>
<span class="t" style="left:841px;top:193px;transform:scaleX(0.8617)">FERCO [FERCO]</span>
<span class="t" style="left:1083px;top:193px;transform:scaleX(0.9045)">419 Un</span>
<div style="left:0px;top:208px;width:32px;height:15px;background:#e4ecf7"></div>
<div style="left:0px;top:223px;width:32px;height:1px;background:#9ebbdb"></div>
<div style="left:32px;top:208px;width:1px;height:16px;background:#9ebbdb"></div>
<div style="left:33px;top:208px;width:1096px;height:15px;background:#f0f0f0"></div>
<div style="left:33px;top:223px;width:1096px;height:1px;background:repeating-linear-gradient(to right,#b0b0b0 0 1px,transparent 1px 2px)"></div>
<span class="t" style="left:35px;top:209px;transform:scaleX(0.8907)">ISTQUINCAILLERIE</span>
<span class="t" style="left:164px;top:209px;transform:scaleX(0.8906)">IST_POIGNEE_EXT</span>
<span class="t" style="left:325px;top:209px;transform:scaleX(0.8760)">PF_CHROME</span>
<div class="clip" style="left:468px;top:208px;width:264px;height:15px">
<span class="t" style="left:2px;top:1px;transform:scaleX(0.8662)">Poignée Chrome</span>
</div>
<span class="t r" style="right:401px;top:209px;transform:scaleX(0.8991)">1,00</span>
<span class="t" style="left:784px;top:209px;transform:scaleX(0.9231)">UN</span>
<span class="t" style="left:841px;top:209px;transform:scaleX(0.8617)">FERCO [FERCO]</span>
<span class="t" style="left:1083px;top:209px;transform:scaleX(0.9074)">0 Un</span>
<div style="left:0px;top:224px;width:32px;height:15px;background:#e4ecf7"></div>
<div style="left:0px;top:239px;width:32px;height:1px;background:#9ebbdb"></div>
<div style="left:32px;top:224px;width:1px;height:16px;background:#9ebbdb"></div>
<div style="left:33px;top:239px;width:1096px;height:1px;background:repeating-linear-gradient(to right,#b0b0b0 0 1px,transparent 1px 2px)"></div>
<span class="t" style="left:35px;top:225px;transform:scaleX(0.8908)">ISTPARCLOSE_TRAVH</span>
<span class="t" style="left:164px;top:225px;transform:scaleX(0.8888)">ISTPARCLOSE_TRAVH_PRF</span>
<span class="t" style="left:325px;top:225px;transform:scaleX(0.8813)">PARCLOSE_28MM_BLANC</span>
<div class="clip" style="left:468px;top:224px;width:264px;height:15px">
<span class="t" style="left:2px;top:1px;transform:scaleX(0.8759)">Parclose pour vitrage 28 mm - Blanc</span>
</div>
<span class="t r" style="right:401px;top:225px;transform:scaleX(0.8991)">462,00</span>
<span class="t" style="left:784px;top:225px;transform:scaleX(0.8003)">mm</span>
<span class="t" style="left:1083px;top:225px;transform:scaleX(0.8991)">0 b6</span>
<div style="left:0px;top:240px;width:32px;height:15px;background:#e4ecf7"></div>
<div style="left:0px;top:255px;width:32px;height:1px;background:#9ebbdb"></div>
<div style="left:32px;top:240px;width:1px;height:16px;background:#9ebbdb"></div>
<div style="left:33px;top:240px;width:1096px;height:15px;background:#f0f0f0"></div>
<div style="left:33px;top:255px;width:1096px;height:1px;background:repeating-linear-gradient(to right,#b0b0b0 0 1px,transparent 1px 2px)"></div>
<span class="t" style="left:35px;top:241px;transform:scaleX(0.8877)">ISTPARCLOSE_TRAVB</span>
<span class="t" style="left:164px;top:241px;transform:scaleX(0.8863)">ISTPARCLOSE_TRAVB_PRF</span>
<span class="t" style="left:325px;top:241px;transform:scaleX(0.8813)">PARCLOSE_28MM_BLANC</span>
<div class="clip" style="left:468px;top:240px;width:264px;height:15px">
<span class="t" style="left:2px;top:1px;transform:scaleX(0.8759)">Parclose pour vitrage 28 mm - Blanc</span>
</div>
<span class="t r" style="right:401px;top:241px;transform:scaleX(0.8991)">462,00</span>
<span class="t" style="left:784px;top:241px;transform:scaleX(0.8003)">mm</span>
<span class="t" style="left:1083px;top:241px;transform:scaleX(0.8991)">0 b6</span>
<div style="left:0px;top:256px;width:32px;height:15px;background:#e4ecf7"></div>
<div style="left:0px;top:271px;width:32px;height:1px;background:#9ebbdb"></div>
<div style="left:32px;top:256px;width:1px;height:16px;background:#9ebbdb"></div>
<div style="left:33px;top:271px;width:1096px;height:1px;background:repeating-linear-gradient(to right,#b0b0b0 0 1px,transparent 1px 2px)"></div>
<span class="t" style="left:35px;top:257px;transform:scaleX(0.8827)">ISTPARCLOSE_MONG</span>
<span class="t" style="left:164px;top:257px;transform:scaleX(0.8822)">ISTPARCLOSE_MONG_PRF</span>
<span class="t" style="left:325px;top:257px;transform:scaleX(0.8813)">PARCLOSE_28MM_BLANC</span>
<div class="clip" style="left:468px;top:256px;width:264px;height:15px">
<span class="t" style="left:2px;top:1px;transform:scaleX(0.8759)">Parclose pour vitrage 28 mm - Blanc</span>
</div>
<span class="t r" style="right:401px;top:257px;transform:scaleX(0.8991)">1324,60</span>
<span class="t" style="left:784px;top:257px;transform:scaleX(0.8003)">mm</span>
<span class="t" style="left:1083px;top:257px;transform:scaleX(0.8991)">0 b6</span>
<div style="left:0px;top:272px;width:32px;height:15px;background:#e4ecf7"></div>
<div style="left:0px;top:287px;width:32px;height:1px;background:#9ebbdb"></div>
<div style="left:32px;top:272px;width:1px;height:16px;background:#9ebbdb"></div>
<div style="left:33px;top:272px;width:1096px;height:15px;background:#f0f0f0"></div>
<div style="left:33px;top:287px;width:1096px;height:1px;background:repeating-linear-gradient(to right,#b0b0b0 0 1px,transparent 1px 2px)"></div>
<span class="t" style="left:35px;top:273px;transform:scaleX(0.8874)">ISTPARCLOSE_MOND</span>
<span class="t" style="left:164px;top:273px;transform:scaleX(0.8860)">ISTPARCLOSE_MOND_PRF</span>
<span class="t" style="left:325px;top:273px;transform:scaleX(0.8813)">PARCLOSE_28MM_BLANC</span>
<div class="clip" style="left:468px;top:272px;width:264px;height:15px">
<span class="t" style="left:2px;top:1px;transform:scaleX(0.8759)">Parclose pour vitrage 28 mm - Blanc</span>
</div>
<span class="t r" style="right:401px;top:273px;transform:scaleX(0.8991)">1324,60</span>
<span class="t" style="left:784px;top:273px;transform:scaleX(0.8003)">mm</span>
<span class="t" style="left:1083px;top:273px;transform:scaleX(0.8991)">0 b6</span>
<div style="left:0px;top:288px;width:32px;height:15px;background:#e4ecf7"></div>
<div style="left:0px;top:303px;width:32px;height:1px;background:#9ebbdb"></div>
<div style="left:32px;top:288px;width:1px;height:16px;background:#9ebbdb"></div>
<div style="left:33px;top:303px;width:1096px;height:1px;background:repeating-linear-gradient(to right,#b0b0b0 0 1px,transparent 1px 2px)"></div>
<span class="t" style="left:35px;top:289px;transform:scaleX(0.9024)">ISTTRAVOUVH</span>
<span class="t" style="left:164px;top:289px;transform:scaleX(0.8965)">ISTTRAVOUVH_PRF</span>
<span class="t" style="left:325px;top:289px;transform:scaleX(0.8974)">17A0110_1000_1000</span>
<div class="clip" style="left:468px;top:288px;width:264px;height:15px">
<span class="t" style="left:2px;top:1px;transform:scaleX(0.8971)">Ouvrant fiche OV HI 28mm RAL : 1000 / 1000</span>
</div>
<span class="t r" style="right:401px;top:289px;transform:scaleX(0.8991)">628,10</span>
<span class="t" style="left:784px;top:289px;transform:scaleX(0.8003)">mm</span>
<span class="t" style="left:1083px;top:289px;transform:scaleX(0.8912)">0 B6</span>
<div style="left:0px;top:304px;width:32px;height:15px;background:#e4ecf7"></div>
<div style="left:0px;top:319px;width:32px;height:1px;background:#9ebbdb"></div>
<div style="left:32px;top:304px;width:1px;height:16px;background:#9ebbdb"></div>
<div style="left:33px;top:304px;width:1096px;height:15px;background:#f0f0f0"></div>
<div style="left:33px;top:319px;width:1096px;height:1px;background:repeating-linear-gradient(to right,#b0b0b0 0 1px,transparent 1px 2px)"></div>
<span class="t" style="left:35px;top:305px;transform:scaleX(0.8976)">ISTTRAVOUVB</span>
<span class="t" style="left:164px;top:305px;transform:scaleX(0.8930)">ISTTRAVOUVB_PRF</span>
<span class="t" style="left:325px;top:305px;transform:scaleX(0.8974)">17A0110_1000_1000</span>
<div class="clip" style="left:468px;top:304px;width:264px;height:15px">
<span class="t" style="left:2px;top:1px;transform:scaleX(0.8971)">Ouvrant fiche OV HI 28mm RAL : 1000 / 1000</span>
</div>
<span class="t r" style="right:401px;top:305px;transform:scaleX(0.8991)">588,00</span>
<span class="t" style="left:784px;top:305px;transform:scaleX(0.8003)">mm</span>
<span class="t" style="left:1083px;top:305px;transform:scaleX(0.8912)">0 B6</span>
<div style="left:0px;top:320px;width:32px;height:15px;background:#e4ecf7"></div>
<div style="left:0px;top:335px;width:32px;height:1px;background:#9ebbdb"></div>
<div style="left:32px;top:320px;width:1px;height:16px;background:#9ebbdb"></div>
<div style="left:33px;top:335px;width:1096px;height:1px;background:repeating-linear-gradient(to right,#b0b0b0 0 1px,transparent 1px 2px)"></div>
<span class="t" style="left:35px;top:321px;transform:scaleX(0.8902)">ISTMONOUVG</span>
<span class="t" style="left:164px;top:321px;transform:scaleX(0.8875)">ISTMONOUVG_PRF</span>
<span class="t" style="left:325px;top:321px;transform:scaleX(0.8974)">17A0110_1000_1000</span>
<div class="clip" style="left:468px;top:320px;width:264px;height:15px">
<span class="t" style="left:2px;top:1px;transform:scaleX(0.8971)">Ouvrant fiche OV HI 28mm RAL : 1000 / 1000</span>
</div>
<span class="t r" style="right:401px;top:321px;transform:scaleX(0.8991)">1451,90</span>
<span class="t" style="left:784px;top:321px;transform:scaleX(0.8003)">mm</span>
<span class="t" style="left:1083px;top:321px;transform:scaleX(0.8912)">0 B6</span>
<div style="left:0px;top:336px;width:32px;height:15px;background:#e4ecf7"></div>
<div style="left:0px;top:351px;width:32px;height:1px;background:#9ebbdb"></div>
<div style="left:32px;top:336px;width:1px;height:16px;background:#9ebbdb"></div>
<div style="left:33px;top:336px;width:1096px;height:15px;background:#f0f0f0"></div>
<div style="left:33px;top:351px;width:1096px;height:1px;background:repeating-linear-gradient(to right,#b0b0b0 0 1px,transparent 1px 2px)"></div>
<span class="t" style="left:35px;top:337px;transform:scaleX(0.8975)">ISTMONOUVD</span>
<span class="t" style="left:164px;top:337px;transform:scaleX(0.8928)">ISTMONOUVD_PRF</span>
<span class="t" style="left:325px;top:337px;transform:scaleX(0.8974)">17A0110_1000_1000</span>
<div class="clip" style="left:468px;top:336px;width:264px;height:15px">
<span class="t" style="left:2px;top:1px;transform:scaleX(0.8971)">Ouvrant fiche OV HI 28mm RAL : 1000 / 1000</span>
</div>
<span class="t r" style="right:401px;top:337px;transform:scaleX(0.8991)">1263,90</span>
<span class="t" style="left:784px;top:337px;transform:scaleX(0.8003)">mm</span>
<span class="t" style="left:1083px;top:337px;transform:scaleX(0.8912)">0 B6</span>
<div style="left:0px;top:352px;width:32px;height:15px;background:#e4ecf7"></div>
<div style="left:0px;top:367px;width:32px;height:1px;background:#9ebbdb"></div>
<div style="left:32px;top:352px;width:1px;height:16px;background:#9ebbdb"></div>
<div style="left:33px;top:367px;width:1096px;height:1px;background:repeating-linear-gradient(to right,#b0b0b0 0 1px,transparent 1px 2px)"></div>
<span class="t" style="left:35px;top:353px;transform:scaleX(0.8907)">ISTQUINCAILLERIE</span>
<span class="t" style="left:164px;top:353px;transform:scaleX(0.8875)">ISTCREMONE</span>
<span class="t" style="left:325px;top:353px;transform:scaleX(0.8852)">CREM270</span>
<div class="clip" style="left:468px;top:352px;width:264px;height:15px">
<span class="t" style="left:2px;top:1px;transform:scaleX(0.8655)">Cremone de Lg 270 mm</span>
</div>
<span class="t r" style="right:401px;top:353px;transform:scaleX(0.8991)">1,00</span>
<span class="t" style="left:784px;top:353px;transform:scaleX(0.9231)">UN</span>
<span class="t" style="left:841px;top:353px;transform:scaleX(0.8617)">FERCO [FERCO]</span>
<span class="t" style="left:986px;top:353px;transform:scaleX(0.8812)">CREM270Fou</span>
<span class="t" style="left:1083px;top:353px;transform:scaleX(0.9056)">50 Un</span>
<div style="left:0px;top:368px;width:32px;height:15px;background:#e4ecf7"></div>
<div style="left:0px;top:383px;width:32px;height:1px;background:#9ebbdb"></div>
<div style="left:32px;top:368px;width:1px;height:16px;background:#9ebbdb"></div>
<div style="left:33px;top:368px;width:1096px;height:15px;background:#f0f0f0"></div>
<div style="left:33px;top:383px;width:1096px;height:1px;background:repeating-linear-gradient(to right,#b0b0b0 0 1px,transparent 1px 2px)"></div>
<span class="t" style="left:35px;top:369px;transform:scaleX(0.8907)">ISTQUINCAILLERIE</span>
<span class="t" style="left:164px;top:369px;transform:scaleX(0.8803)">ISTGACHE</span>
<span class="t" style="left:325px;top:369px;transform:scaleX(0.8698)">GACHE_OB</span>
<div class="clip" style="left:468px;top:368px;width:264px;height:15px">
<span class="t" style="left:2px;top:1px;transform:scaleX(0.8875)">Gâche pour OB</span>
</div>
<span class="t r" style="right:401px;top:369px;transform:scaleX(0.8991)">2,00</span>
<span class="t" style="left:784px;top:369px;transform:scaleX(0.9231)">UN</span>
<span class="t" style="left:841px;top:369px;transform:scaleX(0.8617)">FERCO [FERCO]</span>
<span class="t" style="left:1083px;top:369px;transform:scaleX(0.9074)">0 Un</span>
<div style="left:0px;top:384px;width:32px;height:15px;background:#e4ecf7"></div>
<div style="left:0px;top:399px;width:32px;height:1px;background:#9ebbdb"></div>
<div style="left:32px;top:384px;width:1px;height:16px;background:#9ebbdb"></div>
<div style="left:33px;top:399px;width:1096px;height:1px;background:repeating-linear-gradient(to right,#b0b0b0 0 1px,transparent 1px 2px)"></div>
<span class="t" style="left:35px;top:385px;transform:scaleX(0.8907)">ISTQUINCAILLERIE</span>
<span class="t" style="left:164px;top:385px;transform:scaleX(0.8921)">ISTRENVANGBAS</span>
<span class="t" style="left:325px;top:385px;transform:scaleX(0.8860)">RENVOIANGLE_BAS</span>
<div class="clip" style="left:468px;top:384px;width:264px;height:15px">
<span class="t" style="left:2px;top:1px;transform:scaleX(0.8915)">Renvoi Angle BAS</span>
</div>
<span class="t r" style="right:401px;top:385px;transform:scaleX(0.8991)">1,00</span>
<span class="t" style="left:784px;top:385px;transform:scaleX(0.9231)">UN</span>
<span class="t" style="left:841px;top:385px;transform:scaleX(0.8834)">401003363 [FERCO]</span>
<span class="t" style="left:1083px;top:385px;transform:scaleX(0.9074)">0 Un</span>
<div style="left:0px;top:400px;width:32px;height:15px;background:#e4ecf7"></div>
<div style="left:0px;top:415px;width:32px;height:1px;background:#9ebbdb"></div>
<div style="left:32px;top:400px;width:1px;height:16px;background:#9ebbdb"></div>
<div style="left:33px;top:400px;width:1096px;height:15px;background:#f0f0f0"></div>
<div style="left:33px;top:415px;width:1096px;height:1px;background:repeating-linear-gradient(to right,#b0b0b0 0 1px,transparent 1px 2px)"></div>
<span class="t" style="left:35px;top:401px;transform:scaleX(0.8907)">ISTQUINCAILLERIE</span>
<span class="t" style="left:164px;top:401px;transform:scaleX(0.9036)">ISTRENVANGHAUT</span>
<span class="t" style="left:325px;top:401px;transform:scaleX(0.8966)">RENVOIANGLE_HAUT</span>
<div class="clip" style="left:468px;top:400px;width:264px;height:15px">
<span class="t" style="left:2px;top:1px;transform:scaleX(0.9034)">Renvoi Angle HAUT</span>
</div>
<span class="t r" style="right:401px;top:401px;transform:scaleX(0.8991)">1,00</span>
<span class="t" style="left:784px;top:401px;transform:scaleX(0.9231)">UN</span>
<span class="t" style="left:841px;top:401px;transform:scaleX(0.8834)">401003363 [FERCO]</span>
<span class="t" style="left:1083px;top:401px;transform:scaleX(0.9074)">0 Un</span>
<div style="left:0px;top:416px;width:32px;height:15px;background:#e4ecf7"></div>
<div style="left:0px;top:431px;width:32px;height:1px;background:#9ebbdb"></div>
<div style="left:32px;top:416px;width:1px;height:16px;background:#9ebbdb"></div>
<div style="left:33px;top:431px;width:1096px;height:1px;background:repeating-linear-gradient(to right,#b0b0b0 0 1px,transparent 1px 2px)"></div>
<span class="t" style="left:35px;top:417px;transform:scaleX(0.8907)">ISTQUINCAILLERIE</span>
<span class="t" style="left:164px;top:417px;transform:scaleX(0.8847)">ISTRENVANGCOMPAS</span>
<span class="t" style="left:325px;top:417px;transform:scaleX(0.8806)">RENVOIANGLE_COMPAS</span>
<div class="clip" style="left:468px;top:416px;width:264px;height:15px">
<span class="t" style="left:2px;top:1px;transform:scaleX(0.8840)">Renvoi Angle COMPAS</span>
</div>
<span class="t r" style="right:401px;top:417px;transform:scaleX(0.8991)">1,00</span>
<span class="t" style="left:784px;top:417px;transform:scaleX(0.9231)">UN</span>
<span class="t" style="left:841px;top:417px;transform:scaleX(0.8684)">SCHUCO [SCHUCO]</span>
<span class="t" style="left:1083px;top:417px;transform:scaleX(0.9074)">0 Un</span>
<div style="left:0px;top:432px;width:32px;height:15px;background:#e4ecf7"></div>
<div style="left:0px;top:447px;width:32px;height:1px;background:#9ebbdb"></div>
<div style="left:32px;top:432px;width:1px;height:16px;background:#9ebbdb"></div>
<div style="left:33px;top:432px;width:1096px;height:15px;background:#f0f0f0"></div>
<div style="left:33px;top:447px;width:1096px;height:1px;background:repeating-linear-gradient(to right,#b0b0b0 0 1px,transparent 1px 2px)"></div>
<span class="t" style="left:35px;top:433px;transform:scaleX(0.8907)">ISTQUINCAILLERIE</span>
<span class="t" style="left:164px;top:433px;transform:scaleX(0.9071)">ISTVERHAUT1</span>
<span class="t" style="left:325px;top:433px;transform:scaleX(0.9073)">VERR_HAUT1</span>
<div class="clip" style="left:468px;top:432px;width:264px;height:15px">
<span class="t" style="left:2px;top:1px;transform:scaleX(0.8669)">Verrouilleur haut 1</span>
</div>
<span class="t r" style="right:401px;top:433px;transform:scaleX(0.8991)">1,00</span>
<span class="t" style="left:784px;top:433px;transform:scaleX(0.9231)">UN</span>
<span class="t" style="left:841px;top:433px;transform:scaleX(0.8684)">SCHUCO [SCHUCO]</span>
<span class="t" style="left:1083px;top:433px;transform:scaleX(0.9074)">0 Un</span>
<div style="left:0px;top:448px;width:32px;height:15px;background:#e4ecf7"></div>
<div style="left:0px;top:463px;width:32px;height:1px;background:#9ebbdb"></div>
<div style="left:32px;top:448px;width:1px;height:16px;background:#9ebbdb"></div>
<div style="left:33px;top:463px;width:1096px;height:1px;background:repeating-linear-gradient(to right,#b0b0b0 0 1px,transparent 1px 2px)"></div>
<span class="t" style="left:35px;top:449px;transform:scaleX(0.8907)">ISTQUINCAILLERIE</span>
<span class="t" style="left:164px;top:449px;transform:scaleX(0.8916)">ISTVERBAS1</span>
<span class="t" style="left:325px;top:449px;transform:scaleX(0.8911)">VERR_BAS1</span>
<div class="clip" style="left:468px;top:448px;width:264px;height:15px">
<span class="t" style="left:2px;top:1px;transform:scaleX(0.8613)">Verrouilleur bas 1</span>
</div>
<span class="t r" style="right:401px;top:449px;transform:scaleX(0.8991)">1,00</span>
<span class="t" style="left:784px;top:449px;transform:scaleX(0.9231)">UN</span>
<span class="t" style="left:841px;top:449px;transform:scaleX(0.8684)">SCHUCO [SCHUCO]</span>
<span class="t" style="left:1083px;top:449px;transform:scaleX(0.9074)">0 Un</span>
<div style="left:0px;top:464px;width:32px;height:15px;background:#e4ecf7"></div>
<div style="left:0px;top:479px;width:32px;height:1px;background:#9ebbdb"></div>
<div style="left:32px;top:464px;width:1px;height:16px;background:#9ebbdb"></div>
<div style="left:33px;top:464px;width:1096px;height:15px;background:#f0f0f0"></div>
<div style="left:33px;top:479px;width:1096px;height:1px;background:repeating-linear-gradient(to right,#b0b0b0 0 1px,transparent 1px 2px)"></div>
<span class="t" style="left:35px;top:465px;transform:scaleX(0.8907)">ISTQUINCAILLERIE</span>
<span class="t" style="left:164px;top:465px;transform:scaleX(0.9042)">ISTPROLHAUT1</span>
<span class="t" style="left:325px;top:465px;transform:scaleX(0.9023)">PROL_HAUT1</span>
<div class="clip" style="left:468px;top:464px;width:264px;height:15px">
<span class="t" style="left:2px;top:1px;transform:scaleX(0.8845)">Prolongateur Haut 1</span>
</div>
<span class="t r" style="right:401px;top:465px;transform:scaleX(0.8991)">1,00</span>
<span class="t" style="left:784px;top:465px;transform:scaleX(0.9231)">UN</span>
<span class="t" style="left:841px;top:465px;transform:scaleX(0.8834)">401003363 [FERCO]</span>
<span class="t" style="left:1083px;top:465px;transform:scaleX(0.9074)">0 Un</span>
<div style="left:161px;top:0px;width:1px;height:478px;background:repeating-linear-gradient(to bottom,#b0b0b0 0 1px,transparent 1px 2px)"></div>
<div style="left:322px;top:0px;width:1px;height:478px;background:repeating-linear-gradient(to bottom,#b0b0b0 0 1px,transparent 1px 2px)"></div>
<div style="left:467px;top:0px;width:1px;height:478px;background:repeating-linear-gradient(to bottom,#b0b0b0 0 1px,transparent 1px 2px)"></div>
<div style="left:732px;top:0px;width:1px;height:478px;background:repeating-linear-gradient(to bottom,#b0b0b0 0 1px,transparent 1px 2px)"></div>
<div style="left:781px;top:0px;width:1px;height:478px;background:repeating-linear-gradient(to bottom,#b0b0b0 0 1px,transparent 1px 2px)"></div>
<div style="left:838px;top:0px;width:1px;height:478px;background:repeating-linear-gradient(to bottom,#b0b0b0 0 1px,transparent 1px 2px)"></div>
<div style="left:983px;top:0px;width:1px;height:478px;background:repeating-linear-gradient(to bottom,#b0b0b0 0 1px,transparent 1px 2px)"></div>
<div style="left:1080px;top:0px;width:1px;height:478px;background:repeating-linear-gradient(to bottom,#b0b0b0 0 1px,transparent 1px 2px)"></div>
<div style="left:1129px;top:0px;width:1px;height:478px;background:#a0a0a0"></div>
</div>
<div style="left:572px;top:68px;width:33px;height:1px;background:#f29536"></div>
<div style="left:605px;top:69px;width:130px;height:17px;border:solid #000;border-width:1px 3px 3px 1px"></div>
<div style="left:606px;top:84px;width:128px;height:1px;background:repeating-linear-gradient(to right,#000 0 1px,#8a8a8a 1px 2px)"></div>
<div style="left:733px;top:70px;width:1px;height:15px;background:repeating-linear-gradient(to bottom,#000 0 1px,#8a8a8a 1px 2px)"></div>
<div style="left:1752px;top:51px;width:16px;height:496px;background:#7396c1"></div>
<div style="left:1752px;top:51px;width:16px;height:16px;border:1px solid #4f6796;background:linear-gradient(to right,#deeeff 0,#deeeff 1px,#d9e5f7 1px,#d9e5f7 7px,#c0d4f0 7px,#c0d4f0 13px,#c9ddf8 13px);background-origin:padding-box;background-clip:padding-box"></div>
<div style="left:1752px;top:66px;width:16px;height:354px;border:1px solid #4f6796;background:linear-gradient(to right,#deeeff 0,#deeeff 1px,#d9e5f7 1px,#d9e5f7 7px,#c0d4f0 7px,#c0d4f0 13px,#c9ddf8 13px);background-origin:padding-box;background-clip:padding-box"></div>
<div style="left:1752px;top:531px;width:16px;height:16px;border:1px solid #4f6796;background:linear-gradient(to right,#deeeff 0,#deeeff 1px,#d9e5f7 1px,#d9e5f7 7px,#c0d4f0 7px,#c0d4f0 13px,#c9ddf8 13px);background-origin:padding-box;background-clip:padding-box"></div>
<svg style="left:1755px;top:55px" width="11" height="7"><path d="M5.500 .8L10.200 6H.8z" fill="#3c4566"/></svg>
<svg style="left:1755px;top:536px" width="11" height="7"><path d="M5.500 6.200L10.200 1H.8z" fill="#3c4566"/></svg>
<svg style="left:852px;top:356px" width="15.100" height="22.700" viewBox="0 0 14 21">
<path d="M1.500 1.500v15l3.500-3.400 2.600 6 2.200-1-2.600-5.800h4.800z" fill="#fff" stroke="#000" stroke-width="1"/></svg>
</body></html>
